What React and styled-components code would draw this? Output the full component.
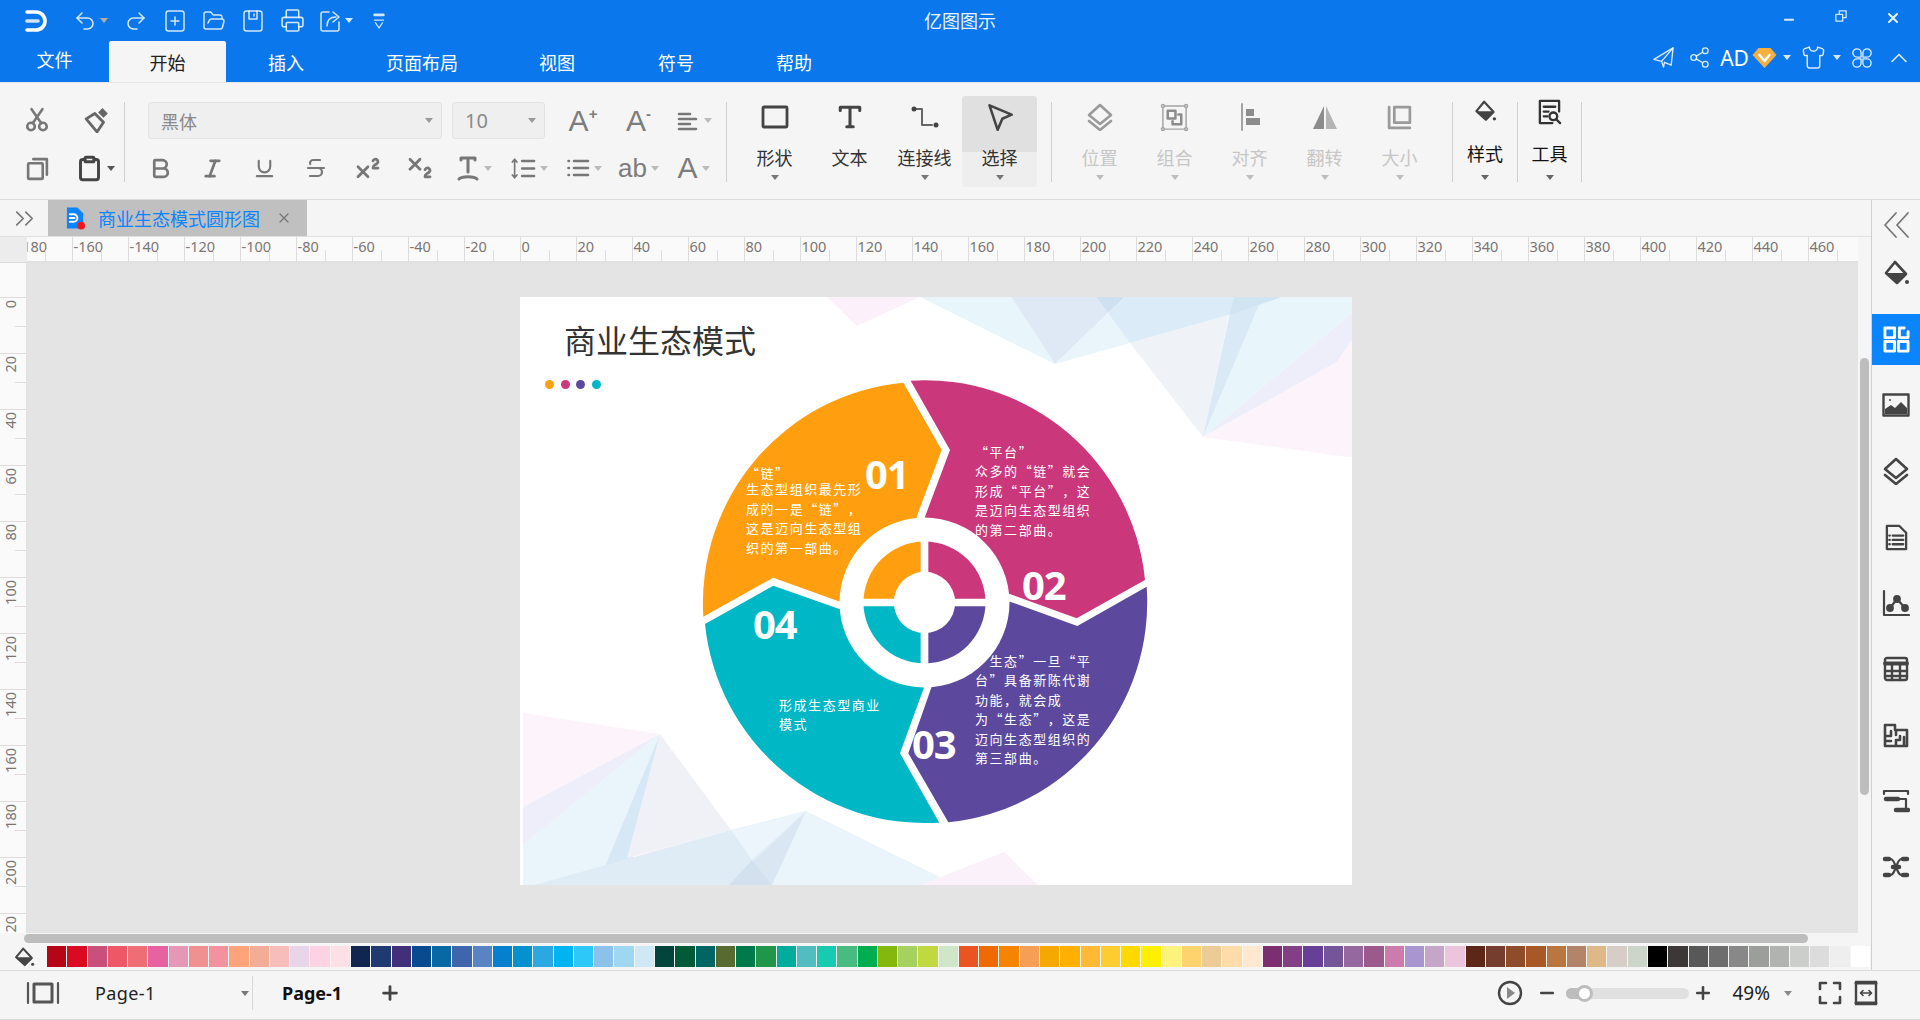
import React from 'react';
import styled, { createGlobalStyle } from 'styled-components';
import {
  Undo2, Redo2, FolderOpen, Printer, Share2, Shirt, ChevronUp, Bold, Italic, Underline,
  Strikethrough, Superscript, Subscript, Clipboard, ChevronsRight, Minus, Plus, X,
} from 'lucide-react';

const GlobalStyle = createGlobalStyle`
html, body { margin: 0; padding: 0; height: 100%; overflow: hidden; background: #f5f5f5; }
body { font-family: "Noto Sans", "Noto Sans CJK SC", sans-serif; color: #333; }
* { box-sizing: border-box; }
`;

const App_ = styled.div`
display: flex;
flex-direction: column;
width: 1920px;
height: 1020px;
`;

/* title bar */
const TitleBar = styled.div`
background: #0a78ec;
height: 82px;
color: #fff;
display: flex;
flex-direction: column;
flex: none;
`;

const QuickRow = styled.div`
height: 41px;
display: flex;
align-items: center;
position: relative;
`;

const Quick = styled.div`
width: ${(p) => p.$w}px;
display: flex;
align-items: center;
justify-content: center;
gap: 3px;
padding-right: ${(p) => p.$pr || 0}px;
color: rgba(255, 255, 255, 0.82);
`;

const AppTitle = styled.div`
position: absolute;
left: 0;
right: 0;
top: 8px;
text-align: center;
font-size: 18px;
line-height: 26px;
color: #e8f2fd;
`;

const WindowButtons = styled.div`
margin-left: auto;
display: flex;
padding-right: 1px;
`;

const WinBtn = styled.div`
width: 52px;
display: flex;
justify-content: center;
padding-top: ${(p) => p.$pt || 0}px;
padding-bottom: 6px;
`;

const TabRow = styled.div`
height: 41px;
display: flex;
align-items: stretch;
`;

const MenuTab = styled.div`
width: ${(p) => p.$w}px;
display: flex;
align-items: center;
justify-content: center;
font-size: 18px;
padding-bottom: ${(p) => (p.$up ? 6 : 0)}px;
color: ${(p) => (p.$active ? '#222' : '#fff')};
background: ${(p) => (p.$active ? '#f5f5f5' : 'transparent')};
border-radius: ${(p) => (p.$active ? '2px 2px 0 0' : '0')};
`;

const TabRight = styled.div`
margin-left: auto;
display: flex;
align-items: center;
padding-bottom: 8px;
color: rgba(255, 255, 255, 0.85);
`;

const RightCell = styled.div`
width: ${(p) => p.$w}px;
display: flex;
align-items: center;
justify-content: center;
`;

const AdText = styled.span`
font-size: 21px;
color: #fff;
`;

const Caret = styled.span`
display: inline-block;
flex: none;
width: 0;
height: 0;
border-left: 4px solid transparent;
border-right: 4px solid transparent;
border-top: 5px solid ${(p) => p.$color || '#999'};
`;

/* ribbon */
const Ribbon = styled.div`
height: 118px;
flex: none;
display: flex;
background: #f5f5f5;
border-top: 1px solid #e6e6e6;
border-bottom: 1px solid #dcdcdc;
`;

const Sep = styled.div`
width: 1px;
height: 80px;
margin-top: 19px;
margin-left: ${(p) => p.$ml || 0}px;
background: #cfcfcf;
flex: none;
`;

const ClipGrid = styled.div`
width: 124px;
flex: none;
display: grid;
grid-template-columns: 60px 60px;
grid-template-rows: 48px 48px;
padding: 13px 0 0 7px;
`;

const Cell = styled.div`
display: flex;
align-items: center;
justify-content: center;
gap: 4px;
width: ${(p) => (p.$w ? `${p.$w}px` : 'auto')};
height: 48px;
padding-right: ${(p) => p.$pr || 0}px;
color: ${(p) => p.$color || '#777'};
flex: none;
`;

const FontGroup = styled.div`
width: 600px;
flex: none;
padding: 19px 0 0 23px;
`;

const FontRow = styled.div`
display: flex;
align-items: center;
height: 37px;
`;

const FormatRow = styled.div`
display: flex;
align-items: center;
height: 48px;
margin: 5px 0 0 -14px;
`;

const Select = styled.div`
width: ${(p) => p.$w}px;
height: 37px;
margin-right: 10px;
padding: 0 8px 0 12px;
background: #efefef;
border: 1px solid #e2e2e2;
border-radius: 3px;
display: flex;
align-items: center;
justify-content: space-between;
font-size: ${(p) => p.$size}px;
color: #8a8a8a;
`;

const GlyphA = styled.span`
font-family: "Liberation Sans", sans-serif;
font-size: ${(p) => p.$size || 30}px;
font-weight: 400;
color: #7c7c7c;
line-height: 1;
`;

const GrowGlyph = styled.span`
display: flex;
align-items: flex-start;
`;

const GlyphMark = styled.span`
font-family: "Liberation Sans", sans-serif;
font-size: 15px;
font-weight: 700;
line-height: 15px;
color: #7c7c7c;
`;

const BigGroup = styled.div`
display: flex;
flex: none;
padding: 13px ${(p) => p.$right || 0}px 0 ${(p) => p.$left || 0}px;
`;

const Big = styled.div`
width: ${(p) => p.$w || 75}px;
height: 91px;
display: grid;
grid-template-rows: ${(p) => (p.$compact ? '32px 46px 13px' : '42px 36px 13px')};
justify-items: center;
align-items: center;
border-radius: 3px;
background: ${(p) => (p.$active ? 'linear-gradient(#e0e0e0 0 56px, #eeeeee 56px)' : 'transparent')};
`;

const BigLabel = styled.div`
font-size: 18px;
line-height: 24px;
padding-top: ${(p) => (p.$compact ? 6 : 4)}px;
color: ${(p) => (p.$off ? '#c6c6c6' : p.$dark ? '#111' : '#333')};
white-space: nowrap;
`;

const BigCaret = styled.div`
align-self: start;
line-height: 0;
`;

/* middle */
const Middle = styled.div`
flex: 1;
display: flex;
min-height: 0;
`;

const Main = styled.div`
width: 1871px;
flex: none;
display: flex;
flex-direction: column;
`;

const TabStrip = styled.div`
height: 37px;
flex: none;
display: flex;
align-items: stretch;
border-bottom: 1px solid #e0e0e0;
`;

const StripToggle = styled.div`
width: 48px;
display: flex;
align-items: center;
justify-content: center;
color: #777;
`;

const DocTab = styled.div`
width: 259px;
background: #c0c0c0;
display: flex;
align-items: center;
padding-left: 17px;
`;

const DocName = styled.span`
font-size: 18px;
color: #0a84ff;
margin-left: 12px;
width: 170px;
white-space: nowrap;
`;

const DocClose = styled.span`
color: #777;
display: flex;
margin-left: 8px;
`;

const RulerRow = styled.div`
height: 26px;
flex: none;
display: flex;
`;

const Corner = styled.div`
width: 27px;
background: #ececec;
border-bottom: 1px solid #ddd;
flex: none;
`;

const HRuler = styled.div`
width: 1831px;
flex: none;
overflow: hidden;
background: #fafafa;
border-bottom: 2px solid #e0e0e0;
`;

const HTrack = styled.div`
display: flex;
margin-left: -11.5px;
height: 24px;
`;

const HMark = styled.div`
width: 56px;
flex: none;
border-left: 1px solid #dcdcdc;
padding-left: 1px;
position: relative;
font-size: 14.5px;
line-height: 19px;
color: #7b7573;
&::after {
  content: "";
  position: absolute;
  left: 28px;
  bottom: 0;
  height: 11px;
  border-left: 1px solid #dcdcdc;
}
`;

const CanvasRow = styled.div`
height: 670px;
flex: none;
display: flex;
`;

const VRuler = styled.div`
width: 27px;
flex: none;
overflow: hidden;
background: #fafafa;
border-right: 1px solid #e0e0e0;
padding-top: 34px;
`;

const VMark = styled.div`
height: 56px;
border-top: 1px solid #dcdcdc;
position: relative;
font-size: 14.5px;
color: #7b7573;
display: flex;
align-items: flex-start;
padding-top: 2px;
&::after {
  content: "";
  position: absolute;
  top: 28px;
  right: 0;
  width: 11px;
  border-top: 1px solid #dcdcdc;
}
`;

const VLabel = styled.span`
writing-mode: vertical-rl;
transform: rotate(180deg);
line-height: 20px;
white-space: nowrap;
`;

const Canvas = styled.div`
width: 1831px;
flex: none;
overflow: hidden;
background: #e4e4e4;
padding: 34px 0 0 493px;
`;

const VScroll = styled.div`
width: 13px;
flex: none;
padding: 95px 2px 0;
background: #f5f5f5;
`;

const Thumb = styled.div`
background: #bdbdbd;
border-radius: 5px;
width: ${(p) => (p.$w ? `${p.$w}px` : 'auto')};
height: ${(p) => p.$h}px;
`;

const HScroll = styled.div`
height: 12px;
flex: none;
padding: 1px 0 0 24px;
background: #f5f5f5;
`;

const PaletteRow = styled.div`
height: 24px;
flex: none;
display: flex;
padding-top: 1px;
`;

const PaletteIcon = styled.div`
width: 47px;
flex: none;
display: flex;
align-items: center;
justify-content: center;
color: #444;
`;

const Swatch = styled.div`
flex: 1;
height: 21px;
margin-right: 1px;
background: ${(p) => p.$c};
`;

/* slide */
const Slide = styled.div`
position: relative;
width: 832px;
height: 588px;
background: #fff;
overflow: hidden;
font-family: "Noto Sans CJK SC", sans-serif;
`;

const Backdrop = styled.svg`
position: absolute;
left: 0;
top: 0;
width: 832px;
height: 588px;
`;

const Wheel = styled.svg`
position: absolute;
left: 170px;
top: 73px;
width: 480px;
height: 480px;
`;

const SlideTitle = styled.div`
position: absolute;
left: 44px;
top: 19px;
font-size: 32px;
line-height: 46px;
color: #333;
white-space: nowrap;
`;

const Dots = styled.div`
position: absolute;
left: 25px;
top: 83px;
display: flex;
gap: 6.5px;
`;

const Dot = styled.span`
width: 9px;
height: 9px;
border-radius: 50%;
background: ${(p) => p.$c};
`;

const Num = styled.div`
position: absolute;
left: ${(p) => p.$x}px;
top: ${(p) => p.$y}px;
font-family: "Open Sans", sans-serif;
font-weight: 700;
font-size: 40px;
line-height: 40px;
letter-spacing: -1px;
color: #fff;
`;

const Para = styled.div`
position: absolute;
left: ${(p) => p.$x}px;
top: ${(p) => p.$y}px;
font-size: 13px;
line-height: 19.4px;
letter-spacing: 1.55px;
text-spacing-trim: space-all;
font-kerning: none;
color: #fff;
white-space: nowrap;
`;

const QuoteLine = styled.div`
margin-bottom: -3px;
`;

/* sidebar */
const Sidebar = styled.div`
width: 49px;
flex: none;
border-left: 1px solid #cfcfcf;
display: flex;
flex-direction: column;
align-items: stretch;
background: #f5f5f5;
`;

const SideBtn = styled.div`
height: ${(p) => p.$h || 66}px;
padding-top: ${(p) => p.$pt || 0}px;
padding-bottom: ${(p) => p.$pb || 0}px;
display: flex;
align-items: center;
justify-content: center;
color: ${(p) => (p.$active ? '#fff' : p.$color || '#444')};
background: ${(p) => (p.$active ? '#0a84ff' : 'transparent')};
`;

/* status */
const StatusBar = styled.div`
height: 50px;
flex: none;
display: flex;
align-items: center;
border-top: 1px solid #dcdcdc;
border-bottom: 1px solid #dcdcdc;
background: #f5f5f5;
padding-bottom: 4px;
`;

const PageSelect = styled.div`
width: 253px;
height: 34px;
display: flex;
align-items: center;
border-right: 1px solid #d8d8d8;
padding-left: 26px;
flex: none;
`;

const PageName = styled.span`
font-size: 18px;
margin-left: 35px;
width: 146px;
color: #222;
letter-spacing: 0.4px;
`;

const CurrentPage = styled.span`
font-size: 18px;
font-weight: 700;
color: #111;
margin-left: 29px;
`;

const AddPage = styled.span`
margin-left: 37px;
display: flex;
color: #444;
`;

const StatusRight = styled.div`
margin-left: auto;
display: flex;
align-items: center;
padding-right: 42px;
color: #444;
`;

const MinusWrap = styled.span`
display: flex;
margin-left: 14px;
`;

const Slider = styled.div`
width: 123px;
height: 11px;
border-radius: 6px;
background: #e0e0e0;
margin: 0 4px 0 9px;
position: relative;
&::before {
  content: "";
  position: absolute;
  left: 0;
  top: 0;
  width: 20px;
  height: 100%;
  border-radius: 6px;
  background: #bdbdbd;
}
`;

const Knob = styled.span`
position: absolute;
left: 10px;
top: -3px;
width: 17px;
height: 17px;
border-radius: 50%;
background: #fff;
border: 3px solid #bdbdbd;
`;

const Zoom = styled.span`
font-size: 19px;
color: #222;
margin: 0 14px 0 19px;
`;

const Gap = styled.span`
width: ${(p) => p.$w}px;
flex: none;
`;

const Ico = styled.svg`
display: block;
flex: none;
width: ${(p) => p.$w || 24}px;
height: ${(p) => p.$h || p.$w || 24}px;
fill: none;
stroke: currentColor;
stroke-width: ${(p) => p.$sw || 2};
stroke-linecap: round;
stroke-linejoin: round;
color: ${(p) => p.$color || 'inherit'};
`;

const Solid = styled.path`
fill: currentColor;
stroke: none;
`;

/* drawings */
const Logo = () => (
  <Ico viewBox="0 0 24 24" $w={24} $sw={3.6} $color="#fff">
    <path d="M3 3h9a9 9 0 0 1 0 18H3" />
    <path d="M3 12h11" stroke="#cfe3fb" />
  </Ico>
);
const NewIcon = () => (
  <Ico viewBox="0 0 24 24" $w={24} $sw={1.5}>
    <rect x="3" y="2" width="18" height="20" rx="2.5" />
    <path d="M12 8v8M8 12h8" />
  </Ico>
);
const SaveIcon = () => (
  <Ico viewBox="0 0 24 24" $w={24} $sw={1.5}>
    <rect x="3" y="2" width="18" height="20" rx="2.5" />
    <path d="M8 2v8h8V2M13 5v2" />
  </Ico>
);
const ExportIcon = () => (
  <Ico viewBox="0 0 24 24" $w={24} $sw={1.5}>
    <path d="M21 13v7a2 2 0 0 1-2 2H5a2 2 0 0 1-2-2V5a2 2 0 0 1 2-2h6" />
    <path d="M9 17c0-6 3-9 9-9M15 3l6 5-6 5" />
  </Ico>
);
const CustomizeIcon = () => (
  <Ico viewBox="0 0 16 24" $w={14} $h={22} $sw={1.5}>
    <path d="M3 5h10" strokeWidth="3" />
    <path d="M3 11h10M4 14l4 6 4-6" />
  </Ico>
);
const MinimizeIcon = () => (
  <Ico viewBox="0 0 12 12" $w={10} $sw={2.4} $color="#d6e7fb"><path d="M1 8h10" /></Ico>
);
const RestoreIcon = () => (
  <Ico viewBox="0 0 14 14" $w={12} $sw={1.5} $color="#d6e7fb">
    <rect x="1" y="5" width="8" height="8" />
    <path d="M5 5V1h8v8H9" />
  </Ico>
);
const SendIcon = () => (
  <Ico viewBox="0 0 24 24" $w={23} $sw={1.4}>
    <path d="M22 2 2 14l8 2 2 6 1-5 7 3z" />
    <path d="M22 2 10 16" />
  </Ico>
);
const Gem = () => (
  <Ico viewBox="0 0 24 22" $w={25} $h={22} $sw={2.6}>
    <path d="M6 1h12l6 7-12 13L0 8z" fill="#f6ae3c" stroke="none" />
    <path d="M7 8l5 6 5-6" stroke="#fff" />
  </Ico>
);
const Clover = () => (
  <Ico viewBox="0 0 24 24" $w={22} $sw={1.5}>
    <path d="M11 11H6.5A4.5 4.5 0 1 1 11 6.500z" />
    <path d="M13 11h4.500A4.500 4.500 0 1 0 13 6.500z" />
    <path d="M11 13H6.500A4.500 4.500 0 1 0 11 17.500z" />
    <path d="M13 13h4.500A4.500 4.500 0 1 1 13 17.500z" />
  </Ico>
);
const Cut = () => (
  <Ico viewBox="0 0 24 24" $w={26} $sw={2.4}>
    <circle cx="6.500" cy="18" r="3.500" />
    <circle cx="17.500" cy="18" r="3.500" />
    <path d="M8 15 17 2M16 15 7 2" />
  </Ico>
);
const Painter = () => (
  <Ico viewBox="0 0 24 24" $w={26} $sw={2.6} $color="#666">
    <path d="M2 11l8-5 8 8-6 9z" />
    <Solid d="M13 5l4-4 5 5-4 4z" />
  </Ico>
);
const CopyIcon = () => (
  <Ico viewBox="0 0 24 24" $w={25} $sw={2.5}>
    <rect x="3" y="7" width="14" height="15" rx="1" />
    <path d="M8 3h13v15" />
  </Ico>
);
const ShapeIcon = () => (
  <Ico viewBox="0 0 28 24" $w={28} $h={24} $sw={2.8} $color="#444"><rect x="2" y="2" width="24" height="20" rx="1" /></Ico>
);
const TextIcon = () => (
  <Ico viewBox="0 0 24 24" $w={26} $sw={2.8} $color="#444"><path d="M3 6V3h18v3M12 3v18M9 21h6" /></Ico>
);
const ConnectorIcon = () => (
  <Ico viewBox="0 0 30 26" $w={30} $h={26} $sw={2} $color="#666">
    <path d="M5 5h7v16h10" />
    <circle cx="4" cy="5" r="2.500" fill="#444" stroke="none" />
    <circle cx="26" cy="21" r="2.500" fill="#444" stroke="none" />
  </Ico>
);
const CursorIcon = () => (
  <Ico viewBox="0 0 24 24" $w={28} $sw={2.2} $color="#444"><path d="M3 2l19 8-8 3.500L10 23z" /></Ico>
);
const LayersIcon = ({ color }) => (
  <Ico viewBox="0 0 28 28" $w={28} $sw={2.6} $color={color}>
    <path d="M14 2l11 10-11 9L3 12z" />
    <path d="M3 18l11 9 11-9" />
  </Ico>
);
const GroupIcon = () => (
  <Ico viewBox="0 0 30 30" $w={29} $sw={1.5} $color="#a3a3a3">
    <rect x="3" y="3" width="24" height="24" />
    <g strokeWidth="2.600" stroke="#8c8c8c"><rect x="8" y="8" width="8" height="8" /><path d="M19 12h3v10h-9v-3" /></g>
    <g fill="#f5f5f5"><circle cx="3" cy="3" r="1.500" /><circle cx="27" cy="3" r="1.500" /><circle cx="3" cy="27" r="1.500" /><circle cx="27" cy="27" r="1.500" /></g>
  </Ico>
);
const AlignIcon = () => (
  <Ico viewBox="0 0 24 28" $w={24} $h={28} $color="#a3a3a3">
    <path d="M4 1v26" />
    <path d="M8 6h8v7H8zM8 15h14v7H8z" fill="#8c8c8c" stroke="none" />
  </Ico>
);
const FlipIcon = () => (
  <Ico viewBox="0 0 28 26" $w={28} $h={26} $color="#8c8c8c">
    <path d="M13 2v23H2z" fill="#8c8c8c" stroke="none" />
    <path d="M15 2v23h11z" fill="#b4b4b4" stroke="none" />
  </Ico>
);
const SizeIcon = () => (
  <Ico viewBox="0 0 26 26" $w={27} $sw={2.6} $color="#9a9a9a">
    <rect x="8" y="3" width="15" height="15" />
    <path d="M3 3v20h20" />
  </Ico>
);
const Bucket = ({ w = 26, color = '#444' }) => (
  <Ico viewBox="0 0 28 28" $w={w} $sw={2.6} $color={color}>
    <path d="M13 2l11 12-9 9L4 13z" />
    <Solid d="M4 13h20l-9 10z" />
    <circle cx="25" cy="22" r="2" fill={color} stroke="none" />
  </Ico>
);
const ToolIcon = () => (
  <Ico viewBox="0 0 26 28" $w={25} $h={27} $sw={2.4} $color="#333">
    <path d="M16 25H3V2h20v11" />
    <path d="M7 8h12M7 13h5M7 18h4" />
    <circle cx="17" cy="18" r="4" />
    <path d="M20 21l4 4" />
  </Ico>
);
const GridIcon = () => (
  <Ico viewBox="0 0 28 28" $w={27} $sw={3} $color="#fff">
    <rect x="2" y="2" width="10" height="10" />
    <path d="M17 2h5v0M26 6v6h-9V2" />
    <rect x="2" y="16" width="10" height="10" />
    <rect x="16" y="16" width="10" height="10" />
  </Ico>
);
const ImageIcon = () => (
  <Ico viewBox="0 0 28 24" $w={28} $h={24} $sw={2.4}>
    <rect x="1.500" y="1.500" width="25" height="21" />
    <Solid d="M3 21v-5l6-4 4 3 6-6 6 6v6z" />
    <circle cx="8" cy="7" r="1" fill="#444" stroke="none" />
  </Ico>
);
const DocIcon = () => (
  <Ico viewBox="0 0 26 28" $w={25} $h={27} $sw={2.4}>
    <path d="M3 2h13l7 7v17H3z" />
    <path d="M9 12h11M9 16.500h11M9 21h11M5.500 12h.5M5.500 16.500h.5M5.500 21h.5" />
  </Ico>
);
const ChartIcon = () => (
  <Ico viewBox="0 0 28 28" $w={28} $sw={2.2}>
    <path d="M2 2v24h25M8 19l7-9 8 9" />
    <circle cx="8" cy="19" r="2.800" fill="currentColor" />
    <circle cx="15" cy="10" r="2.800" fill="currentColor" />
    <circle cx="23" cy="19" r="2.800" fill="currentColor" />
  </Ico>
);
const TableIcon = () => (
  <Ico viewBox="0 0 26 26" $w={26} $sw={2.4}>
    <rect x="2" y="2" width="22" height="22" rx="2" />
    <path d="M2 7.500h22" strokeWidth="4" />
    <path d="M2 15h22M2 20h22M9 9v15M17 9v15" />
  </Ico>
);
const PlanIcon = () => (
  <Ico viewBox="0 0 26 26" $w={26} $sw={2.6}>
    <path d="M2 3h10v5h12v16H2zM2 14h6v-5M13 8v5M2 19h6M13 24v-6h4v-4M21 15v9" />
  </Ico>
);
const TreeIcon = () => (
  <Ico viewBox="0 0 28 26" $w={28} $h={26} $sw={2.2}>
    <path d="M2 6V3h24v3" />
    <path d="M4 11h12" strokeWidth="4.500" />
    <path d="M16 11h8v10" />
    <path d="M14 22h12" strokeWidth="4.500" />
  </Ico>
);
const MapIcon = () => (
  <Ico viewBox="0 0 28 26" $w={28} $h={26} $sw={2.2}>
    <path d="M5 5h3c4 0 4 4 6 8s2 8 6 8h3M23 5h-3c-4 0-4 4-6 8s-2 8-6 8H5" />
    <path d="M3 5h4M21 5h4M3 21h4M21 21h4M11 13h6" strokeWidth="4.500" />
  </Ico>
);
const PageViewIcon = () => (
  <Ico viewBox="0 0 34 24" $w={34} $h={24} $sw={2.2} $color="#555">
    <rect x="8" y="3" width="18" height="18" strokeWidth="3" />
    <path d="M2 2v20M32 2v20" />
  </Ico>
);
const PlayIcon = () => (
  <Ico viewBox="0 0 26 26" $w={26} $sw={2.4}>
    <circle cx="13" cy="13" r="11" />
    <path d="M10 7l8 6-8 6z" fill="#888" stroke="none" />
  </Ico>
);
const FullIcon = () => (
  <Ico viewBox="0 0 24 24" $w={24} $sw={2.6}>
    <path d="M8 2H2v6M16 2h6v6M8 22H2v-6M16 22h6v-6" />
  </Ico>
);
const FitIcon = () => (
  <Ico viewBox="0 0 24 26" $w={24} $h={26} $sw={2.4}>
    <rect x="2" y="2" width="20" height="22" />
    <path d="M2 3h20M2 23h20" strokeWidth="3" />
    <path d="M7 13h10M9 10.500 6.500 13 9 15.500M15 10.500l2.500 2.500-2.500 2.500" strokeWidth="1.600" />
  </Ico>
);
const DocBadge = () => (
  <Ico viewBox="0 0 22 26" $w={21} $h={26} $sw={2}>
    <path d="M2 2h11l6 6v16H2z" fill="#0a84ff" stroke="none" />
    <path d="M5 9h4a4 4 0 0 1 0 8H5M5 13h5" stroke="#fff" />
    <circle cx="17" cy="21" r="4" fill="#f01818" stroke="none" />
  </Ico>
);

const PALETTE = [
  '#b50517', '#d90a22', '#c9507a', '#ee5866', '#ef6e76', '#e8629f', '#e598b5', '#f09090', '#f2929f', '#ffa37a', '#f3ad97', '#f6bdbb', '#e9d5e8', '#fdd3e4', '#fde0e6',
  '#10264f', '#1f3a70', '#412f7a', '#084a8e', '#0868a3', '#3f65ad', '#5884c4', '#0480ce', '#0590d0', '#2ba8e2', '#00b4f0', '#2ec8f8', '#8cc2ea', '#a0d7f0', '#cfe9f4',
  '#00443c', '#005a38', '#006664', '#586a30', '#007a4a', '#1f9648', '#00ad9a', '#52bdc0', '#18cbb0', '#48bb80', '#00ae52', '#84b80e', '#a6d060', '#c0d940', '#cfe6c8',
  '#e95420', '#ef6a00', '#f58400', '#f59e55', '#f4a800', '#ffb000', '#ffb933', '#fccc30', '#ffd900', '#fff000', '#fef27e', '#fed26c', '#ebcc96', '#fddcaa', '#fee8d0',
  '#7c2f70', '#823f85', '#683f96', '#75559a', '#9768a0', '#9c5a8c', '#cc7bac', '#a995cf', '#c5a5c8', '#eac5dc',
  '#5c2717', '#753d2e', '#8e4c2a', '#a85727', '#ba7640', '#b2856a', '#dfb888', '#d6cec6', '#cbd5ca',
  '#000000', '#3c3838', '#585858', '#6e6e6e', '#888888', '#9c9e9c', '#b1b3b1', '#cccecc', '#dcdcdc', '#eeeeee', '#ffffff',
];

// background facets, page pixels
const TRIANGLES = [
  ['#fcf1fa', '307,0 400,0 337,29'],
  ['#e8f5fa', '400,0 491,0 535,67'],
  ['#dfe9f6', '491,0 576,0 588,16 535,67'],
  ['#cfe0f0', '576,0 605,0 588,16'],
  ['#e9f5fa', '535,67 588,16 610,46'],
  ['#dcebf8', '588,16 605,0 714,0 709,18 610,46'],
  ['#eff2f7', '610,46 709,18 683,140'],
  ['#e8f5fb', '739,8 762,0 832,0 832,16 683,140'],
  ['#d9e9f5', '710,16 739,8 683,140'],
  ['#d0e4f2', '714,0 762,0 739,8 709,18'],
  ['#eeeefb', '683,140 832,16 832,43 817,65'],
  ['#fcf3fb', '683,140 817,65 832,43 832,160 828,160'],
  ['#fcf3fb', '3,416 140,437 3,510'],
  ['#eeeefb', '3,510 140,437 3,548'],
  ['#e9f5fb', '3,548 140,437 77,588 3,588'],
  ['#d6e8f6', '140,437 107,588 77,588'],
  ['#eff1f7', '140,437 211,533 107,561'],
  ['#fbf1fa', '107,561 211,533 136,555'],
  ['#e9f5fb', '286,514 436,588 209,588'],
  ['#dfecf6', '14,588 211,533 286,514 209,588'],
  ['#dbe6f3', '286,514 252,588 209,588'],
  ['#d3e1ef', '232,563 252,588 209,588'],
  ['#ebf5fb', '211,533 286,514 232,563'],
  ['#fbf1fa', '400,588 484,555 518,588'],
];

const H_MARKS = Array.from({ length: 33 }, (_, i) => -180 + i * 20);
const V_MARKS = Array.from({ length: 12 }, (_, i) => i * 20);

const BIG_TOOLS = [
  { label: '形状', icon: <ShapeIcon /> },
  { label: '文本', icon: <TextIcon />, noCaret: true },
  { label: '连接线', icon: <ConnectorIcon /> },
  { label: '选择', icon: <CursorIcon />, active: true },
];

const ARRANGE = [
  { label: '位置', icon: <LayersIcon color="#9a9a9a" /> },
  { label: '组合', icon: <GroupIcon /> },
  { label: '对齐', icon: <AlignIcon /> },
  { label: '翻转', icon: <FlipIcon /> },
  { label: '大小', icon: <SizeIcon /> },
];

const Deck = () => (
  <Slide>
    <Backdrop viewBox="0 0 832 588">
      {TRIANGLES.map(([fill, points]) => <polygon key={points} fill={fill} points={points} />)}
    </Backdrop>
    <SlideTitle>商业生态模式</SlideTitle>
    <Dots>
      <Dot $c="#ffa010" />
      <Dot $c="#ca377b" />
      <Dot $c="#5c499e" />
      <Dot $c="#00b7c6" />
    </Dots>
    <Wheel viewBox="0 0 1440 1440">
      <path fill="#ff9f10" d="M640 38 L755 240 L680 440 L703 697 L450 695 L250 623 L40 740 A664 664 0 0 1 640 38Z" />
      <path fill="#ca377b" d="M662 32 L780 240 L705 440 L703 697 L960 672 L1160 745 L1365 630 A664 664 0 0 0 662 32Z" />
      <path fill="#5c499e" d="M1370 650 L1162 768 L960 695 L703 697 L725 950 L655 1150 L775 1357 A664 664 0 0 0 1370 650Z" />
      <path fill="#00b7c6" d="M45 762 L250 647 L450 718 L703 697 L703 950 L630 1150 L748 1358 A664 664 0 0 1 45 762Z" />
      <circle cx="703.500" cy="697.500" r="255" fill="#fff" />
      <path fill="#ff9f10" d="M703.500 697.500V514.500A183 183 0 0 0 520.500 697.500Z" />
      <path fill="#ca377b" d="M703.500 697.500V514.500A183 183 0 0 1 886.500 697.500Z" />
      <path fill="#5c499e" d="M703.500 697.500V880.500A183 183 0 0 0 886.500 697.500Z" />
      <path fill="#00b7c6" d="M703.500 697.500V880.500A183 183 0 0 1 520.500 697.500Z" />
      <path d="M703.500 500V890M510 697.500H900" stroke="#fff" strokeWidth="23" />
      <circle cx="703.500" cy="697.500" r="92" fill="#fff" />
    </Wheel>
    <Num $x={345} $y={157}>01</Num>
    <Num $x={502} $y={268}>02</Num>
    <Num $x={392} $y={427}>03</Num>
    <Num $x={233} $y={307}>04</Num>
    <Para $x={226} $y={166}>
      <QuoteLine>“链”</QuoteLine>
      生态型组织最先形<br />
      成的一是“链”，<br />
      这是迈向生态型组<br />
      织的第一部曲。
    </Para>
    <Para $x={455} $y={145}>
      “平台”<br />
      众多的“链”就会<br />
      形成“平台”，这<br />
      是迈向生态型组织<br />
      的第二部曲。
    </Para>
    <Para $x={455} $y={354}>
      “生态”一旦“平<br />
      台”具备新陈代谢<br />
      功能，就会成<br />
      为“生态”，这是<br />
      迈向生态型组织的<br />
      第三部曲。
    </Para>
    <Para $x={259} $y={398}>
      形成生态型商业<br />
      模式
    </Para>
  </Slide>
);

const App = () => (
  <App_>
    <GlobalStyle />
    <TitleBar>
      <QuickRow>
        <Quick $w={72}><Logo /></Quick>
        <Quick $w={44} $pr={8}><Undo2 size={24} strokeWidth={1.5} /><Caret $color="#b9a9a0" /></Quick>
        <Quick $w={40}><Redo2 size={24} strokeWidth={1.5} /></Quick>
        <Quick $w={38}><NewIcon /></Quick>
        <Quick $w={40}><FolderOpen size={24} strokeWidth={1.5} /></Quick>
        <Quick $w={38}><SaveIcon /></Quick>
        <Quick $w={40}><Printer size={25} strokeWidth={1.5} /></Quick>
        <Quick $w={46}><ExportIcon /><Caret $color="#d6e7fb" /></Quick>
        <Quick $w={42}><CustomizeIcon /></Quick>
        <AppTitle>亿图图示</AppTitle>
        <WindowButtons>
          <WinBtn $pt={3}><MinimizeIcon /></WinBtn>
          <WinBtn><RestoreIcon /></WinBtn>
          <WinBtn><X size={16} strokeWidth={3} color="#e8f2fd" /></WinBtn>
        </WindowButtons>
      </QuickRow>
      <TabRow>
        <MenuTab $w={109} $up>文件</MenuTab>
        <MenuTab $w={117} $active>开始</MenuTab>
        <MenuTab $w={120}>插入</MenuTab>
        <MenuTab $w={152}>页面布局</MenuTab>
        <MenuTab $w={118}>视图</MenuTab>
        <MenuTab $w={120}>符号</MenuTab>
        <MenuTab $w={116}>帮助</MenuTab>
        <TabRight>
          <RightCell $w={36}><SendIcon /></RightCell>
          <RightCell $w={36}><Share2 size={23} strokeWidth={1.4} /></RightCell>
          <RightCell $w={35}><AdText>AD</AdText></RightCell>
          <RightCell $w={24}><Gem /></RightCell>
          <RightCell $w={22}><Caret $color="#d6e7fb" /></RightCell>
          <RightCell $w={30}><Shirt size={25} strokeWidth={1.4} /></RightCell>
          <RightCell $w={18}><Caret $color="#d6e7fb" /></RightCell>
          <RightCell $w={32}><Clover /></RightCell>
          <RightCell $w={42}><ChevronUp size={28} strokeWidth={1.4} /></RightCell>
        </TabRight>
      </TabRow>
    </TitleBar>

    <Ribbon>
      <ClipGrid>
        <Cell><Cut /></Cell>
        <Cell><Painter /></Cell>
        <Cell><CopyIcon /></Cell>
        <Cell $color="#444" $pr={4}><Clipboard size={27} strokeWidth={2.6} /><Caret $color="#555" /></Cell>
      </ClipGrid>
      <Sep />
      <FontGroup>
        <FontRow>
          <Select $w={294} $size={18}>黑体<Caret /></Select>
          <Select $w={93} $size={20}>10<Caret /></Select>
          <Cell $w={56}><GrowGlyph><GlyphA>A</GlyphA><GlyphMark>+</GlyphMark></GrowGlyph></Cell>
          <Cell $w={55}><GrowGlyph><GlyphA>A</GlyphA><GlyphMark>-</GlyphMark></GrowGlyph></Cell>
          <Cell $w={55}>
            <Ico viewBox="0 0 24 24" $w={24} $sw={2.6}><path d="M3 5h11M3 10h17M3 15h11M3 20h17" /></Ico>
            <Caret $color="#bbb" />
          </Cell>
        </FontRow>
        <FormatRow>
          <Cell $w={52}><Bold size={25} strokeWidth={2.6} /></Cell>
          <Cell $w={52}><Italic size={23} strokeWidth={2.8} /></Cell>
          <Cell $w={52}><Underline size={23} strokeWidth={2.2} /></Cell>
          <Cell $w={52}><Strikethrough size={24} strokeWidth={2.2} /></Cell>
          <Cell $w={52}><Superscript size={30} strokeWidth={2.2} /></Cell>
          <Cell $w={52}><Subscript size={30} strokeWidth={2.2} /></Cell>
          <Cell $w={55}>
            <Ico viewBox="0 0 24 26" $w={24} $h={26} $sw={3}><path d="M5 5V3h14v2M12 3v14M3 24c3-3 15-3 18 0" /></Ico>
            <Caret $color="#bbb" />
          </Cell>
          <Cell $w={55}>
            <Ico viewBox="0 0 28 26" $w={26} $h={25} $sw={2.6}><path d="M13 5h13M13 13h13M13 21h13" /><path d="M5 3v20M2.500 6 5 3l2.500 3M2.500 20 5 23l2.500-3" strokeWidth="1.800" /></Ico>
            <Caret $color="#bbb" />
          </Cell>
          <Cell $w={55}>
            <Ico viewBox="0 0 24 24" $w={24} $sw={2.6}><path d="M8 5h14M8 12h14M8 19h14M2.500 5h.5M2.500 12h.5M2.500 19h.5" /></Ico>
            <Caret $color="#bbb" />
          </Cell>
          <Cell $w={55}><GlyphA $size={26}>ab</GlyphA><Caret $color="#bbb" /></Cell>
          <Cell $w={55}><GlyphA>A</GlyphA><Caret $color="#bbb" /></Cell>
        </FormatRow>
      </FontGroup>
      <Sep $ml={1} />
      <BigGroup $left={10} $right={14}>
        {BIG_TOOLS.map((t) => (
          <Big key={t.label} $active={t.active}>
            {t.icon}
            <BigLabel>{t.label}</BigLabel>
            {t.noCaret ? <span /> : <BigCaret><Caret $color="#777" /></BigCaret>}
          </Big>
        ))}
      </BigGroup>
      <Sep />
      <BigGroup $left={10} $right={15}>
        {ARRANGE.map((t) => (
          <Big key={t.label}>
            {t.icon}
            <BigLabel $off>{t.label}</BigLabel>
            <BigCaret><Caret $color="#bdbdbd" /></BigCaret>
          </Big>
        ))}
      </BigGroup>
      <Sep />
      <BigGroup>
        <Big $w={64} $compact>
          <Bucket w={24} />
          <BigLabel $compact $dark>样式</BigLabel>
          <BigCaret><Caret $color="#666" /></BigCaret>
        </Big>
      </BigGroup>
      <Sep />
      <BigGroup>
        <Big $w={63} $compact>
          <ToolIcon />
          <BigLabel $compact $dark>工具</BigLabel>
          <BigCaret><Caret $color="#666" /></BigCaret>
        </Big>
      </BigGroup>
      <Sep />
    </Ribbon>

    <Middle>
      <Main>
        <TabStrip>
          <StripToggle><ChevronsRight size={31} strokeWidth={1.3} /></StripToggle>
          <DocTab>
            <DocBadge />
            <DocName>商业生态模式圆形图</DocName>
            <DocClose><X size={16} strokeWidth={1.8} /></DocClose>
          </DocTab>
        </TabStrip>
        <RulerRow>
          <Corner />
          <HRuler>
            <HTrack>
              {H_MARKS.map((n) => <HMark key={n}>{n}</HMark>)}
            </HTrack>
          </HRuler>
        </RulerRow>
        <CanvasRow>
          <VRuler>
            {V_MARKS.map((n) => <VMark key={n}><VLabel>{n}</VLabel></VMark>)}
          </VRuler>
          <Canvas><Deck /></Canvas>
          <VScroll><Thumb $h={437} /></VScroll>
        </CanvasRow>
        <HScroll><Thumb $w={1784} $h={9} /></HScroll>
        <PaletteRow>
          <PaletteIcon><Bucket w={22} /></PaletteIcon>
          {PALETTE.map((c, i) => <Swatch key={`${c}${i}`} $c={c} />)}
        </PaletteRow>
      </Main>
      <Sidebar>
        <SideBtn $h={50} $color="#777">
          <Ico viewBox="0 0 28 28" $w={28} $sw={1.800}><path d="M14 2 3 14l11 12M26 2 15 14l11 12" /></Ico>
        </SideBtn>
        <SideBtn $h={64} $pb={17}><Bucket w={28} /></SideBtn>
        <SideBtn $h={51} $active><GridIcon /></SideBtn>
        <SideBtn $h={80}><ImageIcon /></SideBtn>
        <SideBtn $h={59} $pb={7}><LayersIcon color="#444" /></SideBtn>
        <SideBtn><DocIcon /></SideBtn>
        <SideBtn><ChartIcon /></SideBtn>
        <SideBtn><TableIcon /></SideBtn>
        <SideBtn><PlanIcon /></SideBtn>
        <SideBtn><TreeIcon /></SideBtn>
        <SideBtn><MapIcon /></SideBtn>
      </Sidebar>
    </Middle>

    <StatusBar>
      <PageSelect>
        <PageViewIcon />
        <PageName>Page-1</PageName>
        <Caret $color="#777" />
      </PageSelect>
      <CurrentPage>Page-1</CurrentPage>
      <AddPage><Plus size={22} strokeWidth={3} /></AddPage>
      <StatusRight>
        <PlayIcon />
        <MinusWrap><Minus size={20} strokeWidth={3} /></MinusWrap>
        <Slider><Knob /></Slider>
        <Plus size={20} strokeWidth={3} />
        <Zoom>49%</Zoom>
        <Caret $color="#888" />
        <Gap $w={26} />
        <FullIcon />
        <Gap $w={12} />
        <FitIcon />
      </StatusRight>
    </StatusBar>
  </App_>
);

export default App;
